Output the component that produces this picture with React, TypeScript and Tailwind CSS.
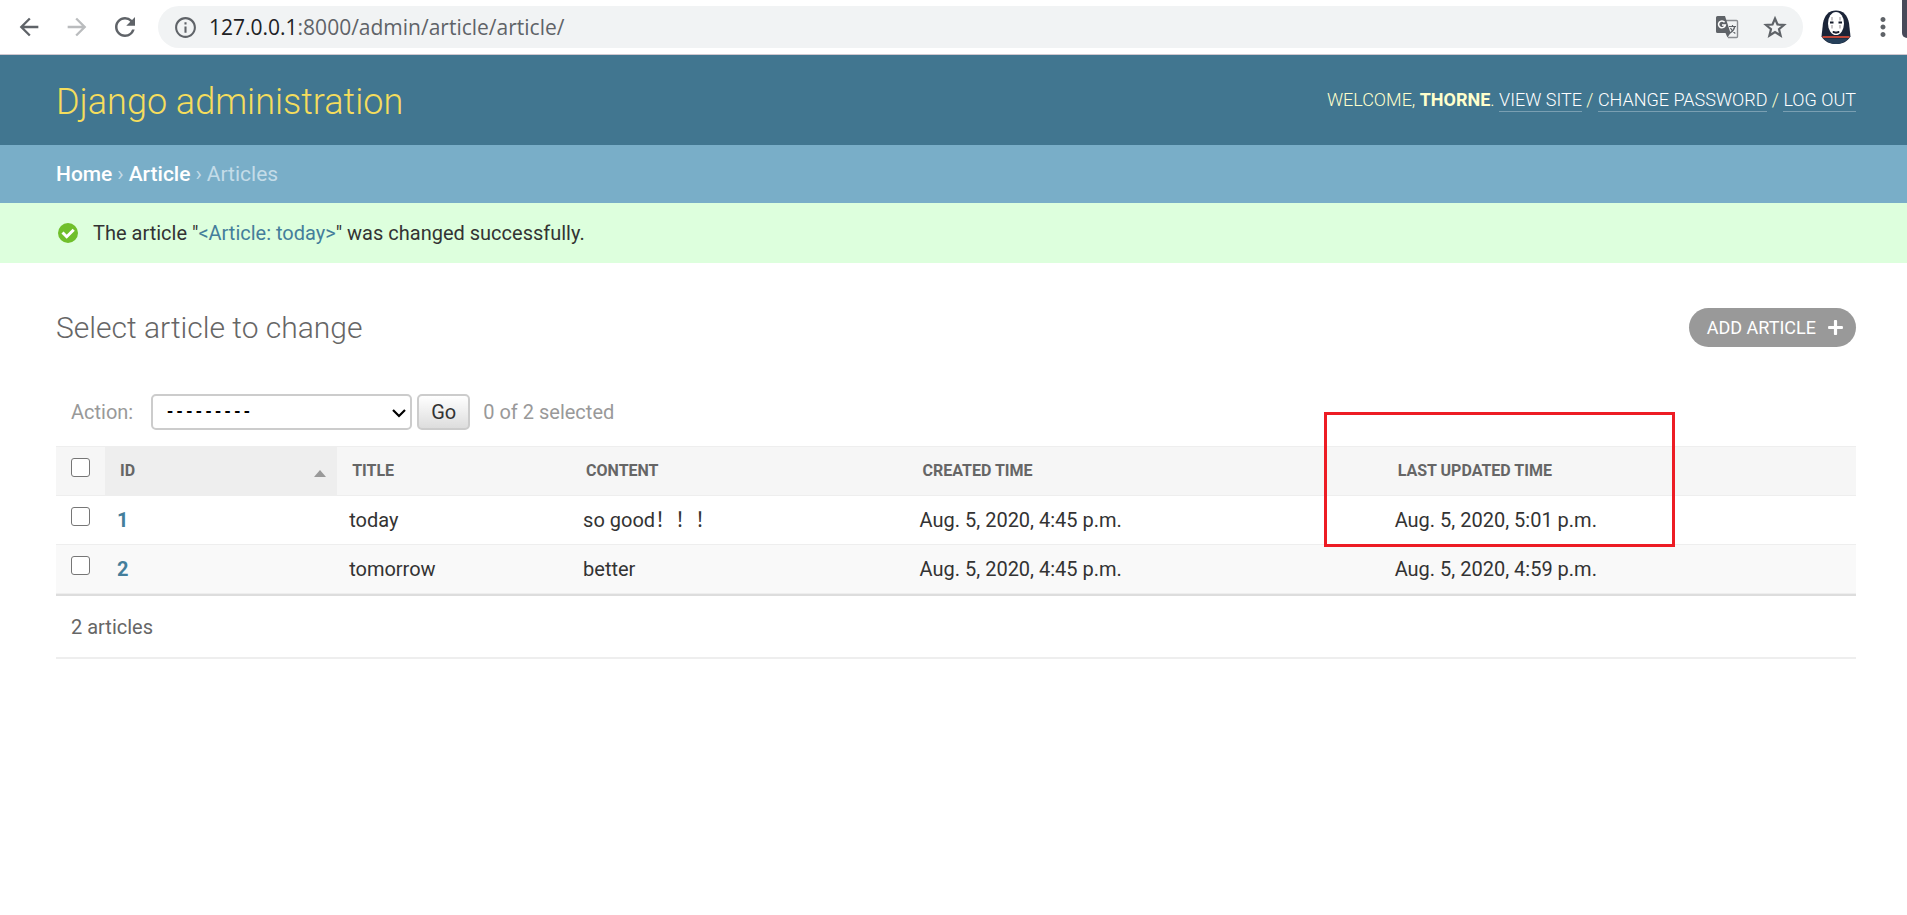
import { FaPlus } from 'react-icons/fa';
import { MdArrowBack, MdArrowForward, MdInfoOutline, MdMoreVert, MdRefresh } from 'react-icons/md';

const articles = [
  { id: 1, title: 'today', content: 'so good！！！', created: 'Aug. 5, 2020, 4:45 p.m.', updated: 'Aug. 5, 2020, 5:01 p.m.' },
  { id: 2, title: 'tomorrow', content: 'better', created: 'Aug. 5, 2020, 4:45 p.m.', updated: 'Aug. 5, 2020, 4:59 p.m.' },
];

const columns = [
  { label: 'Title', width: 'w-[13%]' },
  { label: 'Content', width: 'w-[18.7%]' },
  { label: 'Created time', width: 'w-[26.4%]' },
  { label: 'Last updated time', width: 'w-[26.3%]' },
];

const checkbox =
  'block size-[19px] appearance-none rounded-[3px] border border-[#767676] bg-white checked:bg-[#447e9b]';

function TranslateIcon() {
  return (
    <svg viewBox="0 0 24 24" className="size-6">
      <path d="M10 5.5h11.5a1 1 0 0 1 1 1v15a1 1 0 0 1-1 1H13" fill="none" stroke="#8a8d91" strokeWidth="1.4" />
      <path d="M2.5 1H10l5.5 17h-13A1.5 1.5 0 0 1 1 16.5v-14A1.5 1.5 0 0 1 2.5 1Z" fill="#5f6368" />
      <path d="M10.5 18h5l-3 4.5Z" fill="#5f6368" />
      <path d="M9.6 7.2A3.4 3.4 0 1 0 10.3 10H7" fill="none" stroke="#fff" strokeWidth="1.6" />
      <path d="M14 11.5h7M17.5 10v1.5M19.8 11.5c-.6 2.8-2.3 5-4.8 6.5M15.5 13c1 2.2 2.7 4 4.8 5.5" fill="none" stroke="#5f6368" strokeWidth="1.2" />
    </svg>
  );
}

function StarIcon() {
  return (
    <svg viewBox="0 0 26 26" className="size-[26px]">
      <path
        d="M13 4.5l2.500 6 6.500.5-5 4.200 1.600 6.300-5.600-3.500-5.600 3.500L9 15.200 4 11l6.500-.5Z"
        fill="none"
        stroke="#5f6368"
        strokeWidth="2.2"
      />
    </svg>
  );
}

function Avatar() {
  return (
    <svg viewBox="0 0 30 34" className="h-[34px] w-[30px]">
      <path d="M15 .5C8 .5 3.500 5 2 13L.5 26.500C3.500 31.500 8.500 34 15 34s11.500-2.500 14.500-7.500L28 13C26.500 5 22 .5 15 .5Z" fill="#1b2438" />
      <path d="M2.5 28.5C6 32 10 34 15 34s9-2 12.500-5.500Z" fill="#26405a" />
      <ellipse cx="15" cy="13.5" rx="8" ry="11.5" fill="#fff" />
      <path d="M11 7v3.500M19 7v3.500M11 15v3.500M19 15v3.500" stroke="#a9a4a8" strokeWidth="1.2" />
      <path d="M9 12.500h3.500M17.500 12.500H21" stroke="#141a2a" strokeWidth="1.8" />
      <path d="M12 21.500q3 1.300 6 0v1q-3 1.300-6 0Z" fill="#141a2a" stroke="#141a2a" />
      <path d="M1.500 27h27" stroke="#e8503a" strokeWidth="1.6" />
    </svg>
  );
}

function BrowserBar() {
  return (
    <div className="relative flex h-[55px] items-center border-b border-[#d0c8d0] bg-white pl-[13px] text-[#5f6368]">
      <div className="flex items-center gap-4">
        <button type="button" aria-label="Back" className="grid size-8 place-items-center"><MdArrowBack size={28} /></button>
        <button type="button" aria-label="Forward" className="grid size-8 place-items-center text-[#babcbe]"><MdArrowForward size={28} /></button>
        <button type="button" aria-label="Reload" className="grid size-8 place-items-center"><MdRefresh size={30} /></button>
      </div>
      <div className="ml-[17px] flex h-[42px] flex-1 items-center rounded-full bg-[#f1f3f4] px-[15px]">
        <MdInfoOutline size={25} />
        <span className="ml-[11px] flex-1 font-['Open_Sans',sans-serif] text-[21px] leading-7">
          <span className="text-[#202124]">127.0.0.1</span>:8000/admin/article/article/
        </span>
        <button type="button" aria-label="Translate this page"><TranslateIcon /></button>
        <button type="button" aria-label="Bookmark this page" className="ml-[23px]"><StarIcon /></button>
      </div>
      <button type="button" aria-label="Profile" className="ml-[18px]"><Avatar /></button>
      <button type="button" aria-label="Menu" className="mr-[9px] ml-[17px]"><MdMoreVert size={30} /></button>
      <div className="absolute top-0 right-0 h-[38px] w-[5px] rounded-bl-[5px] bg-[#484a59]" />
    </div>
  );
}

function Header() {
  const link = 'border-b border-[#7a9fb2] pb-px text-white';
  return (
    <header className="flex h-[90px] items-center justify-between bg-[#417690] pr-[51px] pl-14 text-[#ffc]">
      <h1 className="pt-1 text-[36px] leading-10 font-light text-[#f5dd5d]">Django administration</h1>
      <div className="text-[18px] leading-5 font-light uppercase">
        Welcome, <strong className="font-bold">Thorne</strong>.{' '}
        <a href="#site" className={link}>View site</a> / <a href="#password" className={link}>Change password</a> /{' '}
        <a href="#logout" className={link}>Log out</a>
      </div>
    </header>
  );
}

function ResultTable() {
  return (
    <table className="w-full table-fixed border-collapse">
      <thead>
        <tr className="h-[49px] border-y border-[#eee] bg-[#f6f6f6] text-left text-[16px] text-[#666] uppercase">
          <th className="w-[49px] pb-2 pl-[15px]">
            <input type="checkbox" aria-label="Select all articles" className={checkbox} />
          </th>
          <th className="w-[12.9%] bg-[#eee] px-[15px] font-bold">
            <a href="#id" className="flex items-center justify-between">
              ID
              <svg viewBox="0 0 12 7" className="mt-1 -mr-1 h-[7px] w-3"><path d="M6 0l6 7H0Z" fill="#999" /></svg>
            </a>
          </th>
          {columns.map((col) => (
            <th key={col.label} className={`px-[15px] font-bold ${col.width}`}>
              <a href="#sort">{col.label}</a>
            </th>
          ))}
        </tr>
      </thead>
      <tbody>
        {articles.map((row) => (
          <tr key={row.id} className="h-[49px] border-b border-[#eee] even:bg-[#f9f9f9]">
            <td className="pb-2 pl-[15px]">
              <input type="checkbox" aria-label={`Select article ${row.id}`} className={checkbox} />
            </td>
            <th className="px-3 text-left font-bold text-[#447e9b]"><a href="#article">{row.id}</a></th>
            <td className="px-3">{row.title}</td>
            <td className="px-3">{row.content}</td>
            <td className="px-3">{row.created}</td>
            <td className="px-3">{row.updated}</td>
          </tr>
        ))}
      </tbody>
    </table>
  );
}

export default function App() {
  return (
    <div className="min-h-screen bg-white font-['Roboto','Noto_Sans_CJK_SC',sans-serif] text-[20px] leading-6 text-[#333]">
      <BrowserBar />
      <Header />

      <nav className="flex h-[58px] items-center gap-[5px] bg-[#79aec8] px-14 text-[21px] text-[#c4dce8]">
        <a href="#home" className="font-medium text-white">Home</a>
        <span>›</span>
        <a href="#app" className="font-medium text-white">Article</a>
        <span>›</span>
        <span>Articles</span>
      </nav>

      <div className="flex h-[60px] items-center gap-[15px] bg-[#dfd] px-14">
        <svg viewBox="0 0 22 22" className="size-[22px]">
          <circle cx="12" cy="11" r="10" fill="#70bf2b" />
          <path d="M6.500 10.500l4.200 4.200 7-7" fill="none" stroke="#fff" strokeWidth="3" />
        </svg>
        <p>
          The article "<a href="#article" className="text-[#447e9b]">&lt;Article: today&gt;</a>" was changed successfully.
        </p>
      </div>

      <main className="pt-[45px] pr-[51px] pl-14">
        <div className="flex items-start justify-between">
          <h2 className="text-[30px] leading-10 font-light text-[#666]">Select article to change</h2>
          <a href="#add" className="flex h-[39px] items-center gap-[11px] rounded-[20px] bg-[#999] pr-3 pl-[18px] text-[18px] text-white uppercase">
            Add article <FaPlus size={17} />
          </a>
        </div>

        <form className="mt-[46px] flex items-center pl-[15px] text-[#999]">
          <label htmlFor="action">Action:</label>
          <span className="relative ml-[18px]">
            <select
              id="action"
              className="block h-9 w-[261px] appearance-none rounded-[5px] border-2 border-[#ccc] bg-white px-3 font-['Liberation_Mono',monospace] text-[16px] font-bold text-black"
            >
              <option>---------</option>
            </select>
            <svg viewBox="0 0 14 9" className="pointer-events-none absolute top-[15px] right-[6px] h-[9px] w-[14px]">
              <path d="M1 1l6 6 6-6" fill="none" stroke="#000" strokeWidth="2.2" />
            </svg>
          </span>
          <button type="button" className="ml-[5px] h-9 rounded-[5px] border-2 border-[#ccc] bg-linear-to-b from-white to-[#ddd] px-3 text-[#333]">
            Go
          </button>
          <span className="ml-[13px]">0 of 2 selected</span>
        </form>

        <div className="relative mt-4">
          <ResultTable />
          <div className="pointer-events-none absolute -top-[34px] right-[181px] h-[135px] w-[351px] border-3 border-[#ed1c24]" />
        </div>
        <p className="border-t-2 border-b-2 border-t-[#ddd] border-b-[#eee] px-[15px] pt-[19px] pb-[18px] text-[#666]">2 articles</p>
      </main>
    </div>
  );
}
